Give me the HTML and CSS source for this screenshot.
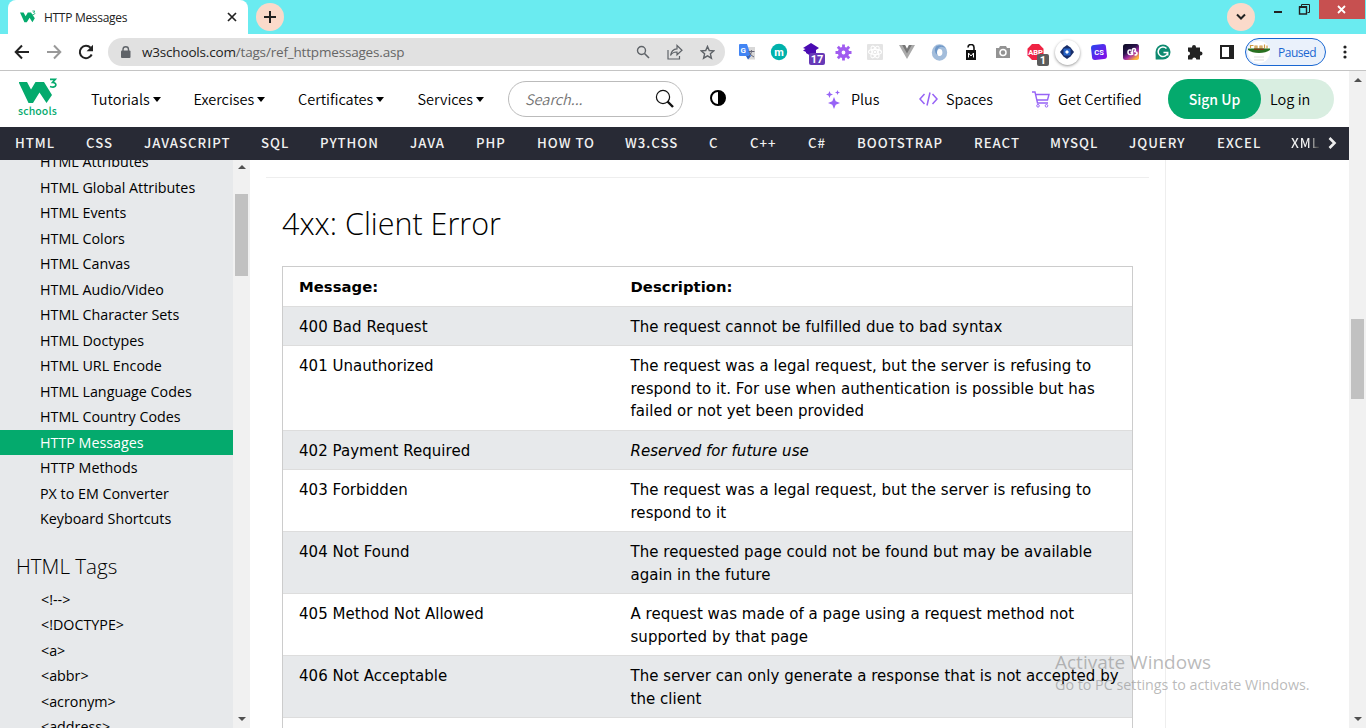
FILE: index.html
```html
<!DOCTYPE html>
<html lang="en">
<head>
<meta charset="utf-8">
<title>HTTP Messages</title>
<link rel="stylesheet" href="styles.css">
</head>
<body>
<div class="tabstrip">
  <div class="tab">
    <svg class="fav" width="16" height="14" viewBox="0 0 40 34"><path fill="#04aa6d" d="M0 6h9l5 9 5.500-9h8L37 20l-6 10-7-11-7 11h-6z"/><path d="M31 2h6l-3 4q4 0 3 3t-6 2" fill="none" stroke="#04aa6d" stroke-width="2"/></svg>
    <span class="tab-title">HTTP Messages</span>
    <svg class="tab-x" width="10" height="10" viewBox="0 0 10 10"><path d="M1 1l8 8M9 1l-8 8" stroke="#222" stroke-width="1.700"/></svg>
  </div>
  <div class="round"><svg width="14" height="14" viewBox="0 0 14 14"><path d="M7 1v12M1 7h12" stroke="#222" stroke-width="2"/></svg></div>
  <div class="round chev"><svg width="12" height="8" viewBox="0 0 12 8"><path d="M2 1.500l4 4 4-4" fill="none" stroke="#222" stroke-width="2"/></svg></div>
  <div class="winbtns">
    <svg width="34" height="20" viewBox="0 0 34 20"><path d="M10 12h8" stroke="#222" stroke-width="2"/></svg>
    <svg class="restore" width="14" height="14" viewBox="0 0 14 14"><path d="M3.500 2.500V.5h8v8h-2" fill="none" stroke="#222"/><path d="M1.500 3h7v7h-7z" fill="none" stroke="#222" stroke-width="1.400"/><path d="M1 3h8" stroke="#222" stroke-width="2"/></svg>
    <div class="close"><svg width="9" height="9" viewBox="0 0 9 9"><path d="M1 1l7 7M8 1l-7 7" stroke="#fff" stroke-width="1.800"/></svg></div>
  </div>
</div>

<div class="toolbar">
  <div class="ic"><svg width="16" height="16" viewBox="0 0 16 16"><path d="M15 8H2M8 1.500L1.700 8 8 14.500" fill="none" stroke="#222" stroke-width="2"/></svg></div>
  <div class="ic"><svg width="16" height="16" viewBox="0 0 16 16"><path d="M1 8h13M8 1.500L14.300 8 8 14.500" fill="none" stroke="#999" stroke-width="2"/></svg></div>
  <div class="ic"><svg width="16" height="16" viewBox="0 0 16 16"><path d="M13.700 10.500A6.200 6.200 0 1 1 12.600 3.800" fill="none" stroke="#222" stroke-width="2"/><path d="M15 .8v6.400H8.600z" fill="#222"/></svg></div>
  <div class="url">
    <svg width="10" height="13" viewBox="0 0 10 13"><rect x="0" y="4.500" width="9.500" height="7.500" rx="1" fill="#5f6368"/><path d="M2 5V3.500a2.700 2.700 0 0 1 5.500 0V5" fill="none" stroke="#5f6368" stroke-width="1.400"/></svg>
    <span class="addr">w3schools.com<i>/tags/ref_httpmessages.asp</i></span>
    <div class="ic"><svg width="14" height="14" viewBox="0 0 14 14"><circle cx="5.500" cy="5.500" r="4" fill="none" stroke="#5f6368" stroke-width="1.400"/><path d="M8.500 8.500l4.500 4.500" stroke="#5f6368" stroke-width="1.600"/></svg></div>
    <div class="ic"><svg width="16" height="16" viewBox="0 0 16 16"><path d="M1 6v9h11.500v-3M3.500 11.500Q4.500 5 10 4.800V1.500L15 6.300 10 10.800V8Q5.500 7.800 3.500 11.500z" fill="none" stroke="#5f6368" stroke-width="1.200"/></svg></div>
    <div class="ic"><svg width="15" height="15" viewBox="0 0 16 16"><path d="M8 1.500l1.900 4.400 4.800.4-3.600 3.100 1.100 4.700L8 11.600l-4.200 2.500 1.100-4.700L1.300 6.300l4.800-.4z" fill="none" stroke="#5f6368" stroke-width="1.500"/></svg></div>
  </div>
  <div class="exts">
    <div class="ic"><svg width="16" height="16" viewBox="0 0 16 16"><path d="M6 3h10v12.500H9z" fill="#d8d8d8"/><path d="M0 1q0-1 1-1h7l4 12H1q-1 0-1-1z" fill="#4285f4"/><path d="M7 12h5l-3 3.500z" fill="#2b62c4"/><text x="1.500" y="9" font-size="8" class="gb">G</text><path d="M9.500 7.500h6M12.400 6v2q-.5 3-3 4.500M10.500 8.500q1 3 4.500 4.500" stroke="#667" fill="none"/></svg></div>
    <div class="ic"><svg width="18" height="18" viewBox="0 0 18 18"><circle cx="9" cy="9" r="8.200" fill="#00b1ab"/><text x="9" y="12.500" class="gb" text-anchor="middle" font-size="11">m</text></svg></div>
    <div class="ic"><svg class="lift" width="16" height="14" viewBox="0 0 16 14"><path d="M8 0l8 5-3 2v3l-5 3-5-3V9L0 7.500 2.500 6 0 5z" fill="#4a0bb2"/></svg><b class="badge violet">17</b></div>
    <div class="ic"><svg width="17" height="17" viewBox="0 0 17 17"><g stroke="#a15cf0" fill="none"><circle cx="8.500" cy="8.500" r="3.800" stroke-width="3.800"/><path stroke-width="2.800" d="M8.500 .5v4M8.500 12.500v4M.5 8.500h4M12.500 8.500h4M2.800 2.800l3 3M11.200 11.200l3 3M2.800 14.200l3-3M11.200 5.800l3-3"/></g></svg></div>
    <div class="ic"><svg width="16" height="16" viewBox="0 0 16 16"><rect width="16" height="16" rx="1" fill="#e4e4e4"/><g fill="none" stroke="#fff" stroke-width="1.100"><ellipse cx="8" cy="8" rx="6.500" ry="2.600"/><ellipse cx="8" cy="8" rx="6.500" ry="2.600" transform="rotate(60 8 8)"/><ellipse cx="8" cy="8" rx="6.500" ry="2.600" transform="rotate(120 8 8)"/></g><circle cx="8" cy="8" r="1.300" fill="#fff"/></svg></div>
    <div class="ic"><svg width="16" height="14" viewBox="0 0 16 14"><path d="M0 0h6l2 4 2-4h6L8 14z" fill="#aaa"/><path d="M3.200 0H6l2 4 2-4h2.800L8 8.500z" fill="#777"/></svg></div>
    <div class="ic"><svg width="17" height="17" viewBox="0 0 17 17"><ellipse cx="8.500" cy="8.500" rx="5.300" ry="5.800" fill="none" stroke="#a3bddb" stroke-width="4.800"/><path d="M5 2.500q6-3.500 10 2-5-3.500-8 0-2 4 0 7.500Q2 8 5 2.500z" fill="#6f98c8"/></svg></div>
    <div class="ic"><svg width="12" height="16" viewBox="0 0 12 16"><path d="M3 3.500q0-3 3-3t3 3V7" fill="none" stroke="#111" stroke-width="1.600"/><rect x="1" y="6" width="10" height="10" fill="#111"/><path d="M3.500 13.500V9L6 12l2.500-3v4.500" fill="none" stroke="#fff"/></svg></div>
    <div class="ic"><svg width="14" height="14" viewBox="0 0 14 14"><path d="M0 3h3l1-2h6l1 2h3v10H0z" fill="#939393"/><circle cx="7" cy="7.500" r="3" fill="none" stroke="#fff" stroke-width="1.500"/></svg></div>
    <div class="ic"><svg width="17" height="16" viewBox="0 0 17 16"><path d="M5 0h7l4.500 4.700v6.600L12 16H5L.5 11.300V4.700z" fill="#ef2343"/><text x="8.500" y="11" text-anchor="middle" class="gb" font-size="7.500">ABP</text></svg><b class="badge gray">1</b></div>
    <div class="ic"><div class="disc"><svg width="14" height="14" viewBox="0 0 14 14"><path d="M7 0l3.500 2.500L14 7l-3.500 4.500L7 14l-3.500-2.500L0 7l3.500-4.500z" fill="#182d68"/><rect x="3.500" y="3.500" width="7" height="7" rx="1" fill="#2864c8"/><path d="M7 5l2 2-2 2-2-2z" fill="#fff"/></svg></div></div>
    <div class="ic"><svg width="16" height="16" viewBox="0 0 16 16"><defs><linearGradient id="cs" x2="1" y2="1"><stop stop-color="#2448ee"/><stop offset="1" stop-color="#8e07e8"/></linearGradient></defs><path d="M3 1l9-1q3 0 3 3l1 9q0 3-3 3l-9 1q-3 0-3-3L0 4q0-3 3-3z" fill="url(#cs)"/><text x="8" y="10.800" text-anchor="middle" class="gb" font-size="7.500">CS</text></svg></div>
    <div class="ic"><svg width="16" height="16" viewBox="0 0 16 16"><defs><linearGradient id="gp" x2=".7" y2="1"><stop stop-color="#090b20"/><stop offset=".45" stop-color="#29134a"/><stop offset=".7" stop-color="#a32aa5"/><stop offset="1" stop-color="#ffb339"/></linearGradient></defs><rect width="16" height="16" rx="2.500" fill="url(#gp)"/><g fill="none" stroke="#fff" stroke-width="1.600"><path d="M8.500 6.200Q5 5.200 5 8t2.500 2.500q1.800 0 1.800-2.300H7.500"/><path d="M9.500 11V6q0-1.500 1.500-1.500T12.500 6t-1.500 1.500q3 0 3 1.700T11.500 11"/></g></svg></div>
    <div class="ic"><svg width="16" height="16" viewBox="0 0 16 16"><path d="M8 .5A7.500 7.500 0 1 1 8 15.500H.7L.5 8A7.500 7.500 0 0 1 8 .5z" fill="#0d8a70"/><path d="M11.500 4.500A4.800 4.800 0 1 0 12.700 8.500H8.500M12.700 8.500v3" fill="none" stroke="#fff" stroke-width="1.500"/></svg></div>
    <div class="ic"><svg width="16" height="16" viewBox="0 0 16 16"><path d="M1 3.500h4V3a2 2 0 0 1 4 0v.5h4v4h.5a2 2 0 0 1 0 4H13v4H9.300a2 2 0 0 0-4 0H1v-4a2 2 0 0 0 0-4z" fill="#222"/></svg></div>
    <div class="ic"><svg width="14" height="14" viewBox="0 0 14 14"><path d="M1 1h12v12H1z" fill="#fff" stroke="#222" stroke-width="2"/><path d="M9 1h4v12H9z" fill="#222"/></svg></div>
  </div>
  <div class="paused">
    <svg width="22" height="22" viewBox="0 0 22 22"><circle cx="11" cy="11" r="11" fill="#fff"/><path d="M2.500 7V4.500h3M7 5h2v2H7zM12 5h2v2h-2zM16.500 3.500v4M19 4.500v3" fill="none" stroke="#cf9a42" stroke-width="1.200"/><path d="M0 7.500h22v1.500q-4 3-11 3T0 9z" fill="#287021"/><path d="M6 7.500h10v1.500H6z" fill="#713c13"/><path d="M6 16h10M6 19h10" stroke="#ddd"/></svg>
    <span>Paused</span>
  </div>
  <svg class="menu" width="4" height="14" viewBox="0 0 4 14"><g fill="#222"><circle cx="2" cy="2" r="1.600"/><circle cx="2" cy="7" r="1.600"/><circle cx="2" cy="12" r="1.600"/></g></svg>
</div>

<div class="view">
  <div class="page">
    <header class="top">
      <div class="logo">
        <svg width="40" height="26" viewBox="0 0 40 26"><path fill="#04aa6d" d="M-.5 4H8l4 7.500L16.500 4H25l8 13-5.500 8-7-10.500L14 25H9.500z"/><path d="M31 1.300h5.300L33.500 4.500q3.800.2 3.300 2.800Q36 10 31 8.500" fill="none" stroke="#04aa6d" stroke-width="1.700"/></svg>
        <span>schools</span>
      </div>
      <nav class="mainnav">
        <a>Tutorials</a><a>Exercises</a><a>Certificates</a><a>Services</a>
      </nav>
      <div class="search"><span>Search...</span><svg width="20" height="20" viewBox="0 0 20 20"><circle cx="8" cy="8" r="6.600" fill="none" stroke="#111" stroke-width="1.200"/><path d="M12.500 12.500l5.500 5.500" stroke="#111" stroke-width="2.400"/></svg></div>
      <svg class="contrast" width="16" height="16" viewBox="0 0 16 16"><circle cx="8" cy="8" r="7" fill="#fff" stroke="#000" stroke-width="2"/><path d="M8 1a7 7 0 0 1 0 14z"/></svg>
      <div class="promo p1"><svg width="16" height="19" viewBox="0 0 16 19"><path d="M8 7l1.700 4.200L14 13l-4.300 1.700L8 19l-1.700-4.300L2 13l4.300-1.800zM3.500 1l1 2.500L7 4.500l-2.500 1-1 2.500-1-2.500L0 4.500l2.500-1zM11.500 0l.7 1.800 1.800.7-1.800.7-.7 1.800-.7-1.800L9 2.500l1.800-.7z" fill="#9763f6"/></svg><span>Plus</span></div>
      <div class="promo p2"><svg width="19" height="16" viewBox="0 0 19 16"><path d="M5.500 3L1 8l4.500 5M13.500 3L18 8l-4.500 5M11 1.500L8 14.500" fill="none" stroke="#9763f6" stroke-width="1.500"/></svg><span>Spaces</span></div>
      <div class="promo p3"><svg width="18" height="17" viewBox="0 0 18 17"><path d="M0 1h3l2.500 11H16M3.500 3.500H17L15.500 9H5" fill="none" stroke="#9763f6" stroke-width="1.400"/><circle cx="6" cy="14.800" r="1.300" fill="none" stroke="#9763f6"/><circle cx="14.500" cy="14.800" r="1.300" fill="none" stroke="#9763f6"/></svg><span>Get Certified</span></div>
      <div class="auth"><b>Sign Up</b><span>Log in</span></div>
    </header>
    <nav class="topics">
      <a>HTML</a><a>CSS</a><a>JAVASCRIPT</a><a>SQL</a><a>PYTHON</a><a>JAVA</a><a>PHP</a><a>HOW TO</a><a>W3.CSS</a><a>C</a><a>C++</a><a>C#</a><a>BOOTSTRAP</a><a>REACT</a><a>MYSQL</a><a>JQUERY</a><a>EXCEL</a><a class="fade">XML</a>
      <svg width="9" height="12" viewBox="0 0 9 12"><path d="M1.500 1l5 5-5 5" fill="none" stroke="#eee" stroke-width="2.600"/></svg>
    </nav>
    <div class="content">
      <aside class="side">
        <a>HTML Attributes</a><a>HTML Global Attributes</a><a>HTML Events</a><a>HTML Colors</a><a>HTML Canvas</a><a>HTML Audio/Video</a><a>HTML Character Sets</a><a>HTML Doctypes</a><a>HTML URL Encode</a><a>HTML Language Codes</a><a>HTML Country Codes</a><a class="on">HTTP Messages</a><a>HTTP Methods</a><a>PX to EM Converter</a><a>Keyboard Shortcuts</a>
        <h2>HTML Tags</h2>
        <div class="tags"><a>&lt;!--&gt;</a><a>&lt;!DOCTYPE&gt;</a><a>&lt;a&gt;</a><a>&lt;abbr&gt;</a><a>&lt;acronym&gt;</a><a>&lt;address&gt;</a></div>
      </aside>
      <div class="sb inner"><i class="up"></i><i class="thumb"></i><i class="down"></i></div>
      <main class="main">
        <hr>
        <h1>4xx: Client Error</h1>
        <div class="table">
          <div class="row r0"><span>Message:</span><span>Description:</span></div>
          <div class="row r1 alt"><span>400 Bad Request</span><span>The request cannot be fulfilled due to bad syntax</span></div>
          <div class="row r3"><span>401 Unauthorized</span><span>The request was a legal request, but the server is refusing to<br>respond to it. For use when authentication is possible but has<br>failed or not yet been provided</span></div>
          <div class="row r1 alt"><span>402 Payment Required</span><span><em>Reserved for future use</em></span></div>
          <div class="row r2"><span>403 Forbidden</span><span>The request was a legal request, but the server is refusing to<br>respond to it</span></div>
          <div class="row r2 alt"><span>404 Not Found</span><span>The requested page could not be found but may be available<br>again in the future</span></div>
          <div class="row r2"><span>405 Method Not Allowed</span><span>A request was made of a page using a request method not<br>supported by that page</span></div>
          <div class="row r2 alt"><span>406 Not Acceptable</span><span>The server can only generate a response that is not accepted by<br>the client</span></div>
          <div class="row r2"></div>
        </div>
      </main>
      <div class="right"></div>
    </div>
  </div>
  <div class="sb outer"><i class="up"></i><i class="thumb"></i><i class="down"></i></div>
</div>
<div class="watermark"><div class="w1">Activate Windows</div><div class="w2">Go to PC settings to activate Windows.</div></div>
</body>
</html>
```
FILE: styles.css
```css
* { box-sizing: border-box; }
body { margin: 0; width: 1366px; height: 728px; overflow: hidden; display: flex; flex-direction: column; background: #fff; color: #000; font-family: "Open Sans", "Noto Sans", sans-serif; }
svg { display: block; flex: none; }
span, a { white-space: nowrap; }

.tabstrip { height: 34px; flex: none; background: #6aebf0; display: flex; align-items: flex-start; padding-left: 8px; }
.tab { width: 240px; height: 34px; background: #fff; border-radius: 8px 8px 0 0; display: flex; align-items: center; padding: 0 11px 0 12px; }
.tab-title { font-size: 12px; margin-left: 8px; flex: 1; color: #222; letter-spacing: -.3px; }
.round { width: 28px; height: 28px; border-radius: 50%; background: #fbdaca; margin: 3px 0 0 8px; display: flex; align-items: center; justify-content: center; }
.chev { margin-left: 943px; }
.winbtns { display: flex; margin-left: 9px; }
.restore { margin: 4px 7px 0 0; }
.close { width: 46px; height: 19px; background: #c75050; display: flex; align-items: center; justify-content: center; padding-right: 2px; }

.toolbar { height: 37px; flex: none; border-bottom: 1px solid #c4c4c4; display: flex; align-items: center; padding-left: 6px; }
.ic { width: 32px; flex: none; display: flex; align-items: center; justify-content: center; position: relative; }
.url { width: 617px; height: 28px; background: #e1e1e1; border-radius: 14px; margin-left: 6px; display: flex; align-items: center; padding: 0 2px 0 13px; }
.addr { font-size: 13.500px; flex: 1; margin-left: 11px; color: #222; letter-spacing: -.18px; }
.addr i { font-style: normal; color: #666; }
.exts { display: flex; margin-left: 6px; align-items: center; }
.lift { margin-bottom: 4px; }
.gb { fill: #fff; font-family: Roboto, sans-serif; font-weight: 700; }
.badge { position: absolute; font: 700 11px/13px Roboto, sans-serif; color: #fff; border-radius: 2px; text-align: center; left: 14px; top: 10px; width: 16px; height: 12px; }
.badge.violet { background: #673ab7; }
.badge.gray { background: #5c5c5c; left: 18px; width: 12px; }
.disc { width: 25px; height: 25px; border-radius: 50%; background: #fff; box-shadow: 0 1px 3px #999; display: flex; align-items: center; justify-content: center; }
.paused { width: 81px; height: 28px; border: 1px solid #1967d2; border-radius: 14px; background: #eaf1fb; margin-left: 2px; display: flex; align-items: center; padding-left: 2px; font-size: 12px; color: #1b66d1; }
.paused span { margin-left: 8px; letter-spacing: -.5px; }
.menu { margin-left: 17px; }

.view { flex: 1; min-height: 0; display: flex; }
.page { width: 1349px; display: flex; flex-direction: column; }
.top { height: 56px; flex: none; display: flex; align-items: center; font-family: "Noto Sans CJK SC", sans-serif; font-size: 14.500px; font-weight: 350; }
.top span, .mainnav { margin-top: -2px; }
.logo { width: 91px; padding-left: 18px; color: #04aa6d; font-weight: 500; line-height: 14px; font-size: 10.500px; letter-spacing: .1px; }
.logo svg { margin: -2px 0 0 1px; }
.mainnav { display: grid; grid-template-columns: 102.500px 104.500px 119.500px 90.500px; }
.mainnav a { display: flex; align-items: center; gap: 3px; }
.mainnav a::after { content: ""; margin-top: 2px; border: solid transparent; border-width: 5px 4.500px 0; border-top-color: #000; }
.search { width: 175px; height: 36px; border: 1px solid #bbb; border-radius: 18px; display: flex; align-items: center; justify-content: space-between; padding: 0 7px 0 16px; color: #757575; font-style: italic; }
.contrast { margin: -3px 0 0 26.500px; }
.promo { display: flex; align-items: center; }
.p1 { margin-left: 100.500px; width: 93px; }
.promo span { margin-left: 8px; }
.promo.p1 span { margin-left: 9px; }
.p2 { width: 113px; }
.p3 { width: 136px; }
.auth { width: 166px; height: 40px; border-radius: 20px; background: #d9eee1; display: flex; align-items: center; }
.auth b { width: 93px; height: 40px; line-height: 40px; border-radius: 20px; background: #04aa6d; color: #fff; text-align: center; font-weight: 500; font-size: 14px; }
.auth span { margin-left: 9px; }

.topics { height: 33px; flex: none; background: #282a35; color: #f1f1f1; font: 500 13.200px/30px "Noto Sans CJK SC", sans-serif; letter-spacing: 1px; padding: 0 0 2px 15px; display: grid; grid-template-columns: 71px 58px 117px 59px 90px 66px 61px 88px 84px 41px 58px 49px 117px 76px 79px 88px 74px 37px 15px; align-items: center; }
.fade { background: linear-gradient(90deg, #f1f1f1 60%, #555 90%); background-clip: text; -webkit-background-clip: text; color: transparent; width: 29px; }

.content { flex: 1; min-height: 0; display: flex; overflow: hidden; }
.side { width: 233px; flex: none; background: #e7e9eb; overflow: hidden; }
.side a { display: block; height: 25.5px; line-height: 26.500px; padding-left: 40px; font-size: 14.300px; }
.side > a:first-child { margin-top: -10.600px; }
.side .on { background: #04aa6d; color: #fff; }
.side .tags a { padding-left: 41px; }
.side h2 { font-weight: 300; font-size: 20.600px; line-height: 28px; margin: 20px 0 7px 16px; }
.sb { width: 17px; flex: none; background: #f1f1f1; display: flex; flex-direction: column; align-items: center; }
.up { border: solid transparent; border-width: 0 4px 4px; border-bottom-color: #505050; }
.down { border: solid transparent; border-width: 4px 4px 0; border-top-color: #505050; margin: auto 0 7px; }
.thumb { width: 13px; background: #c1c1c1; }
.outer .up { margin-top: 7px; }
.outer .thumb { margin-top: 237px; height: 80px; }
.inner .up { margin-top: 5px; }
.inner .thumb { margin-top: 25px; height: 82px; }

.main { width: 915px; flex: none; padding: 17px 16px 0; }
hr { border: 0; height: 1px; background: #eee; margin: 0; }
h1 { font-weight: 350; font-size: 30.500px; line-height: 44px; margin: 23px 0 21px 16px; letter-spacing: 0; }
.table { margin-left: 16px; width: 851px; border: 1px solid #ccc; font: 15px/22.5px "DejaVu Sans", sans-serif; }
.row { display: grid; grid-template-columns: 331.500px 1fr; padding: 9px 0 0 16px; border-bottom: 1px solid #ddd; letter-spacing: .03px; }
.alt { background: #e7e9eb; }
.r0 { height: 40px; font-weight: 700; font-size: 14.800px; }
.r1 { height: 39px; }
.r2 { height: 62px; }
.r3 { height: 85px; }
.right { flex: 1; border-left: 1px solid #eee; }
.watermark { position: absolute; left: 1055px; top: 650px; color: rgba(140,140,140,.6); white-space: nowrap; }
.w1 { font-size: 19px; line-height: 25px; }
.w2 { font-size: 14.300px; line-height: 20px; }
```
